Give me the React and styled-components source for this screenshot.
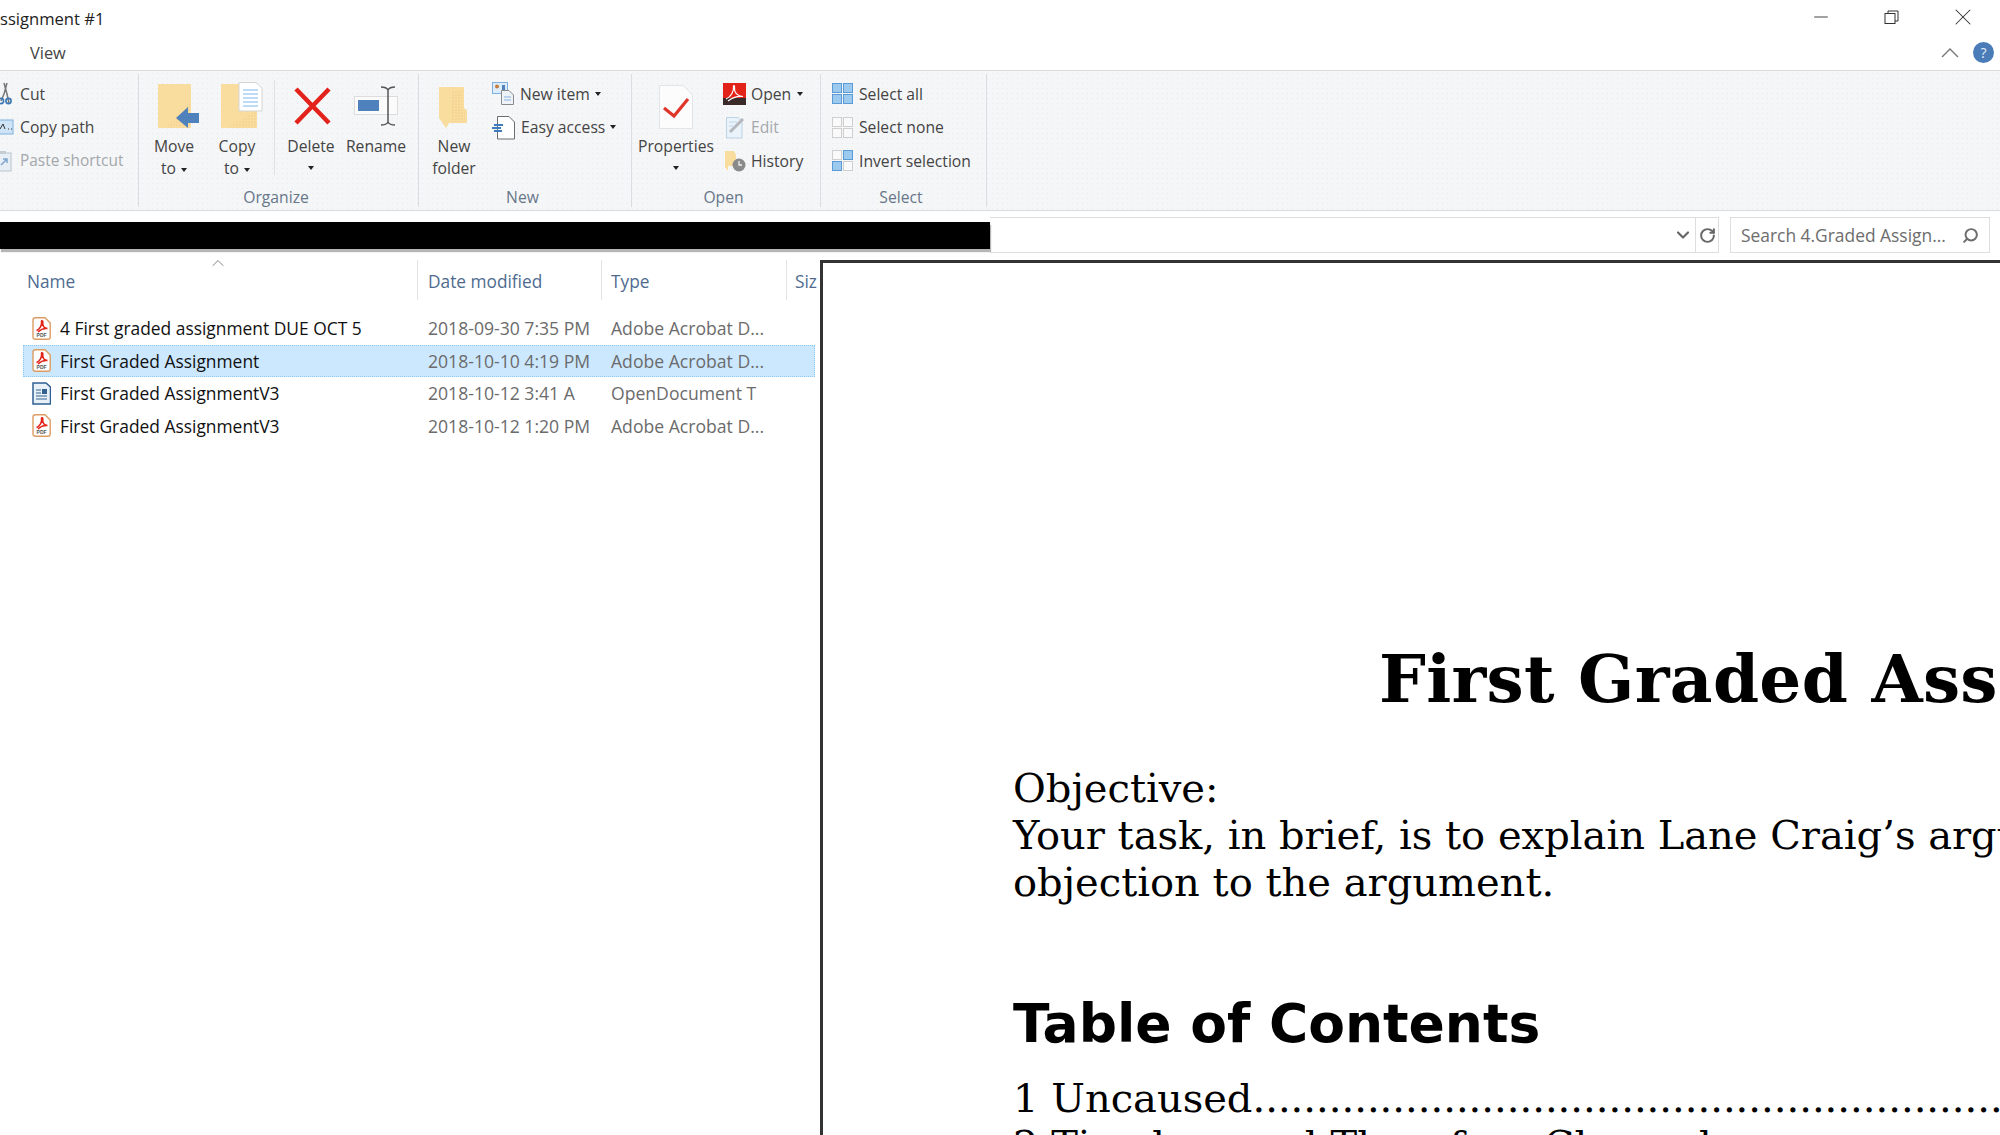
import React from "react";
import styled, { createGlobalStyle } from "styled-components";
import { ChevronDown, ChevronUp, RotateCw, Minus, X, Search } from "lucide-react";

const GlobalStyle = createGlobalStyle`
  html, body { margin: 0; padding: 0; background: #fff; }
  body { font-family: "Open Sans", "Noto Sans", sans-serif; }
`;

const Page = styled.div`
  width: 2000px;
  height: 1135px;
  overflow: hidden;
  display: flex;
  flex-direction: column;
  background: #fff;
`;

const TitleBar = styled.div`
  height: 36px;
  display: flex;
  align-items: center;
  justify-content: space-between;
  padding-top: 1px;
  box-sizing: border-box;
`;
const Title = styled.div`
  font-size: 16.6px;
  color: #222;
`;
const WindowButtons = styled.div`
  display: flex;
  align-items: center;
  color: #333;
  margin: 0 2px 3px 0;
`;
const WindowButton = styled.div`
  width: 71px;
  display: flex;
  justify-content: center;
`;

const TabRow = styled.div`
  height: 34px;
  display: flex;
  align-items: center;
  justify-content: space-between;
  padding: 0 6px 1px 30px;
  box-sizing: border-box;
`;
const Tab = styled.div`
  font-size: 16.4px;
  color: #444;
`;
const TabRight = styled.div`
  display: flex;
  align-items: center;
  gap: 14px;
  color: #777;
`;
const Help = styled.div`
  width: 21px;
  height: 21px;
  border-radius: 50%;
  background: #4a7db8;
  color: #e4eef8;
  font-size: 14px;
  line-height: 21px;
  text-align: center;
`;

const Ribbon = styled.div`
  height: 141px;
  display: flex;
  padding: 3px 0;
  box-sizing: border-box;
  border-top: 1px solid #dadbdc;
  border-bottom: 1px solid #dadbdc;
  background-color: #f5f6f7;
  background-image: radial-gradient(#e8e9eb 0.6px, transparent 0.8px);
  background-size: 5px 5px;
  color: #444;
  font-size: 15.7px;
`;
const Group = styled.div`
  width: ${(p) => p.$w}px;
  box-sizing: border-box;
  border-right: 1px solid #dcdde0;
  display: flex;
  flex-direction: column;
  flex-shrink: 0;
  overflow: hidden;
`;
const GroupBody = styled.div`
  flex: 1;
  display: flex;
  padding: 4px 0 0 ${(p) => p.$pad || 0}px;
  min-height: 0;
`;
const GroupLabel = styled.div`
  height: 20px;
  line-height: 20px;
  padding-right: 5px;
  text-align: center;
  color: #67778a;
  font-size: 15.7px;
`;
const LargeButton = styled.div`
  width: ${(p) => p.$w}px;
  flex-shrink: 0;
  display: flex;
  flex-direction: column;
  align-items: center;
  margin-left: ${(p) => p.$ml || 0}px;
`;
const IconBox = styled.div`
  height: 56px;
  display: flex;
  align-items: center;
  justify-content: center;
  margin-bottom: 1px;
`;
const LargeLabel = styled.div`
  line-height: 22px;
  text-align: center;
  white-space: nowrap;
`;
const RibbonDivider = styled.div`
  width: 1px;
  height: 95px;
  margin: 2px 4px 0 6px;
  background: #dfe0e2;
  flex-shrink: 0;
`;
const SmallColumn = styled.div`
  display: flex;
  flex-direction: column;
  margin-left: ${(p) => p.$ml || 0}px;
  margin-top: -1px;
`;
const SmallItem = styled.div`
  height: 33.5px;
  display: flex;
  align-items: center;
  gap: ${(p) => p.$gap ?? 6}px;
  white-space: nowrap;
  color: ${(p) => (p.$dim ? "#a4a8ad" : "inherit")};
  font-size: ${(p) => (p.$dim ? "15.4px" : "inherit")};
`;
const DimText = styled.span`
  color: #a4a8ad;
`;
const Caret = styled.span`
  display: inline-block;
  width: 0;
  height: 0;
  border-left: 3.5px solid transparent;
  border-right: 3.5px solid transparent;
  border-top: 4px solid #222;
  margin-left: ${(p) => p.$ml ?? 5}px;
  vertical-align: middle;
`;
const CaretRow = styled.div`
  height: 22px;
  display: flex;
  align-items: center;
  justify-content: center;
`;
const SmallIconBox = styled.div`
  width: ${(p) => p.$w || 23}px;
  display: flex;
  justify-content: center;
  flex-shrink: 0;
  margin-left: ${(p) => p.$ml || 0}px;
`;

const AddressRow = styled.div`
  height: 42px;
  display: flex;
  flex-shrink: 0;
`;
const RedactBar = styled.div`
  width: 990px;
  height: 27px;
  margin-top: 11px;
  background: #000;
  box-shadow: 1px 3px 1px #b5b5b5;
`;
const AddressBox = styled.div`
  width: 729px;
  height: 36px;
  margin-top: 6px;
  box-sizing: border-box;
  border: 1px solid #dedede;
  border-left: 0;
  display: flex;
  justify-content: flex-end;
  color: #666;
`;
const AddressDrop = styled.div`
  width: 24px;
  display: flex;
  align-items: center;
  justify-content: center;
`;
const AddressRefresh = styled.div`
  width: 22px;
  display: flex;
  align-items: center;
  justify-content: center;
  border-left: 1px solid #dedede;
`;
const SearchBox = styled.div`
  width: 260px;
  height: 36px;
  margin: 6px 0 0 11px;
  box-sizing: border-box;
  border: 1px solid #dedede;
  display: flex;
  align-items: center;
  justify-content: space-between;
  padding: 0 10px 0 10px;
  font-size: 17.4px;
  color: #6d6d6d;
  white-space: nowrap;
`;
const SearchIcon = styled(Search)`
  transform: scaleX(-1);
  flex-shrink: 0;
`;

const Content = styled.div`
  flex: 1;
  min-height: 0;
  display: flex;
  padding-top: 7px;
`;
const FileList = styled.div`
  width: 820px;
  flex-shrink: 0;
  overflow: hidden;
`;
const HeaderRow = styled.div`
  height: 40px;
  display: flex;
  margin-bottom: 12px;
  position: relative;
`;
const HeaderCell = styled.div`
  width: ${(p) => p.$w}px;
  box-sizing: border-box;
  padding-left: ${(p) => p.$pad}px;
  border-right: ${(p) => (p.$sep ? "1px solid #e3e3e3" : "0")};
  line-height: 44px;
  font-size: 17.3px;
  color: #4e6b8f;
  overflow: hidden;
  white-space: nowrap;
  flex-shrink: 0;
`;
const SortArrow = styled(ChevronUp)`
  position: absolute;
  left: 208px;
  top: -7px;
  color: #777;
`;
const FileRow = styled.div`
  width: 792px;
  height: 32.5px;
  margin-left: 23px;
  box-sizing: border-box;
  display: flex;
  align-items: center;
  font-size: 17.6px;
  color: #111;
  background: ${(p) => (p.$active ? "#cce8ff" : "transparent")};
  outline: ${(p) => (p.$active ? "1px dotted #8fc8f5" : "0")};
  outline-offset: -1px;
  white-space: nowrap;
`;
const NameCell = styled.div`
  width: 394px;
  padding-left: 9px;
  box-sizing: border-box;
  display: flex;
  align-items: center;
  gap: 9px;
  flex-shrink: 0;
  font-size: 17.4px;
`;
const MetaCell = styled.div`
  width: ${(p) => p.$w}px;
  padding-left: ${(p) => p.$pad}px;
  box-sizing: border-box;
  color: #6b6b6b;
  flex-shrink: 0;
`;

const DocPane = styled.div`
  flex: 1;
  min-width: 0;
  border-top: 3px solid #333;
  border-left: 3px solid #333;
  overflow: hidden;
  white-space: nowrap;
  color: #000;
`;
const DocTitle = styled.h1`
  margin: 378px 0 0 556px;
  font-family: "DejaVu Serif", serif;
  font-weight: 700;
  font-size: 66px;
  line-height: 76px;
  letter-spacing: 0.3px;
`;
const DocText = styled.div`
  margin: ${(p) => p.$mt || 0}px 0 0 190px;
  font-family: "DejaVu Serif", serif;
  font-size: 40px;
  line-height: 47px;
`;
const DocHeading = styled.h2`
  margin: 88px 0 0 190px;
  font-family: "DejaVu Sans", sans-serif;
  font-weight: 700;
  font-size: 53.5px;
  line-height: 60px;
`;

const dotFill = "#e2a25f";

function DotPattern({ id }) {
  return (
    <pattern id={id} width="3" height="3" patternUnits="userSpaceOnUse">
      <circle cx="1" cy="1" r="0.6" fill={dotFill} />
    </pattern>
  );
}

function MoveIcon() {
  return (
    <svg width="62" height="48" viewBox="0 0 62 48">
      <defs><DotPattern id="dMove" /></defs>
      <rect x="15" y="2" width="33" height="44" rx="1" fill="#f9dd9e" />
      <polygon points="48,20 48,46 22,46" fill="url(#dMove)" opacity="0.5" />
      <polygon points="33,36 45,25 45,31 56,31 56,41 45,41 45,46" fill="#4f81bd" />
    </svg>
  );
}

function CopyIcon() {
  return (
    <svg width="62" height="48" viewBox="0 0 62 48">
      <defs><DotPattern id="dCopy" /></defs>
      <rect x="15" y="2" width="36" height="44" rx="1" fill="#f9dd9e" />
      <polygon points="51,28 51,46 22,46" fill="url(#dCopy)" opacity="0.6" />
      <polygon points="33,0.5 50,0.5 56,6 56,29 33,29" fill="#fff" stroke="#d4d4d4" />
      <path d="M37 8h15M37 12h15M37 16h15M37 20h15M37 24h15" stroke="#bcdcf5" strokeWidth="2" />
    </svg>
  );
}

function DeleteIcon() {
  return (
    <svg width="64" height="48" viewBox="0 0 64 48">
      <path d="M17 7L50 41M50 7L17 41" stroke="#e3231b" strokeWidth="4.5" />
    </svg>
  );
}

function RenameIcon() {
  return (
    <svg width="66" height="48" viewBox="0 0 66 48">
      <rect x="11.5" y="14.5" width="43" height="18" fill="#fbfbfc" stroke="#dcdcdc" />
      <rect x="15" y="18" width="21" height="11" fill="#4f81bd" />
      <path d="M45 8V40M38 5c3 0 6 1 7 3c1-2 4-3 7-3M38 43c3 0 6-1 7-3c1 2 4 3 7 3" stroke="#555" strokeWidth="1.5" fill="none" />
    </svg>
  );
}

function NewFolderIcon() {
  return (
    <svg width="70" height="48" viewBox="0 0 70 48">
      <defs><DotPattern id="dNew" /></defs>
      <polygon points="20,5 45,5 45,26 48,28 48,41 30,41 27,46 20,36" fill="#f9dd9e" />
      <polygon points="32,8 43,8 43,28 46,30 46,40 32,40" fill="url(#dNew)" opacity="0.7" />
    </svg>
  );
}

function PropertiesIcon() {
  return (
    <svg width="86" height="48" viewBox="0 0 86 48">
      <polygon points="26.5,3.5 50,3.5 59.5,13 59.5,46.5 26.5,46.5" fill="#fcfcfd" stroke="#e3e4e6" />
      <path d="M31 26L41 34L55 17" stroke="#e0352b" strokeWidth="3.2" fill="none" />
    </svg>
  );
}

function ScissorsIcon() {
  return (
    <svg width="12" height="24" viewBox="0 0 12 24">
      <path d="M4 1L7 12L9 21M7 1L4 12L1 19" stroke="#777" strokeWidth="1.5" fill="none" />
      <circle cx="8.5" cy="19" r="2.6" stroke="#3b78b5" strokeWidth="1.6" fill="none" />
      <circle cx="1" cy="19" r="2.6" stroke="#3b78b5" strokeWidth="1.6" fill="none" />
    </svg>
  );
}

function CopyPathIcon() {
  return (
    <svg width="14" height="16" viewBox="0 0 14 16">
      <rect x="-6" y="1" width="19" height="14" fill="#cfe4f7" stroke="#7fb0dd" />
      <path d="M0 10L3 5L5 10M8 10h1M11 10h1" stroke="#333" fill="none" />
    </svg>
  );
}

function PasteShortcutIcon() {
  return (
    <svg width="12" height="22" viewBox="0 0 12 22">
      <rect x="-4" y="3" width="15" height="18" fill="#e7eef5" stroke="#b9c3cc" />
      <rect x="0" y="1" width="6" height="3" fill="#c4ccd4" />
      <path d="M1 15L7 9M3 9h4v4" stroke="#7fa6cf" strokeWidth="1.5" fill="none" />
    </svg>
  );
}

function NewItemIcon() {
  return (
    <svg width="23" height="23" viewBox="0 0 23 23">
      <rect x="0.5" y="0.5" width="15" height="11" fill="#dcecfa" stroke="#7fb0dd" />
      <circle cx="5" cy="4.5" r="2" fill="#c67b3e" />
      <rect x="10" y="3" width="3" height="5" fill="#4f81bd" />
      <polygon points="9.5,8.5 17,8.5 21.5,13 21.5,22.5 9.5,22.5" fill="#eef3f8" stroke="#8a8a8a" />
      <path d="M12 15h7M12 18h7" stroke="#a9c7e6" strokeWidth="1.4" />
    </svg>
  );
}

function EasyAccessIcon() {
  return (
    <svg width="24" height="25" viewBox="0 0 24 25">
      <polygon points="5.5,1.5 17,1.5 22.5,7 22.5,24 5.5,24" fill="#fff" stroke="#6d6d6d" />
      <path d="M2 10h9M0 13h9M2 16h8" stroke="#3f7cbd" strokeWidth="1.8" />
    </svg>
  );
}

function AcrobatIcon() {
  return (
    <svg width="23" height="22" viewBox="0 0 23 22">
      <rect width="23" height="22" fill="#e2231a" />
      <rect y="15" width="23" height="7" fill="#3a2a2a" />
      <path d="M3 16C8 14 11 8 10.5 4C10 2 12 2 11.5 5C11 9 14 13 20 13.5C16 13 10 14 5 18" stroke="#fff" strokeWidth="1.2" fill="none" />
    </svg>
  );
}

function EditIcon() {
  return (
    <svg width="21" height="23" viewBox="0 0 21 23">
      <polygon points="1.5,1.5 13,1.5 17,5 17,22 1.5,22" fill="#eaf2fa" stroke="#bcd2e6" />
      <path d="M5 16L18 3" stroke="#b4b8bd" strokeWidth="3" />
      <path d="M4 6h8M4 10h6" stroke="#c3d8ec" />
    </svg>
  );
}

function HistoryIcon() {
  return (
    <svg width="21" height="22" viewBox="0 0 21 22">
      <polygon points="0,1 9,1 11,5 11,16 3,16 3,21 0,17" fill="#f9dd9e" />
      <circle cx="14" cy="15" r="6.5" fill="#8a8a8a" />
      <path d="M14 11v4h3" stroke="#eee" strokeWidth="1.3" fill="none" />
    </svg>
  );
}

function SelectIcon({ on }) {
  const cells = [[0, 0], [11, 0], [0, 11], [11, 11]];
  return (
    <svg width="21" height="21" viewBox="0 0 21 21">
      {cells.map(([x, y], i) => (
        <rect
          key={i}
          x={x + 0.5}
          y={y + 0.5}
          width="9"
          height="9"
          fill={on[i] ? "#9cc9ee" : "#fafafa"}
          stroke={on[i] ? "#5b9bd5" : "#cfcfcf"}
        />
      ))}
    </svg>
  );
}

function PdfIcon() {
  return (
    <svg width="19" height="23" viewBox="0 0 19 23">
      <path d="M1 3Q1 .8 3.5 .8H13L18.2 6V20Q18.2 22.2 16 22.2H3.5Q1 22.2 1 20Z" fill="#fff" stroke="#dd9c63" strokeWidth="1.4" />
      <path d="M4.5 13.5C8 12 10 8 9.5 5C9 3 11.5 3 10.8 6C10.5 9 12 11 15.5 11.5C12 11 9 12 6 15" stroke="#e2231a" strokeWidth="1.5" fill="none" />
      <text x="9.6" y="20" fontSize="5" textAnchor="middle" fill="#555" fontFamily="Liberation Sans, sans-serif" fontWeight="700">PDF</text>
    </svg>
  );
}

function OdtIcon() {
  return (
    <svg width="19" height="23" viewBox="0 0 19 23">
      <polygon points="1,1 14,1 18.5,5 18.5,22 1,22" fill="#e8f0f8" stroke="#2f5f92" strokeWidth="1.5" />
      <path d="M4 8h5M4 11h5M4 14h11M4 17h11" stroke="#33628f" />
      <rect x="10" y="7" width="5" height="5" fill="#33628f" />
    </svg>
  );
}

const files = [
  { name: "4 First graded assignment DUE OCT 5", date: "2018-09-30 7:35 PM", type: "Adobe Acrobat D...", icon: <PdfIcon /> },
  { name: "First Graded Assignment", date: "2018-10-10 4:19 PM", type: "Adobe Acrobat D...", icon: <PdfIcon />, active: true },
  { name: "First Graded AssignmentV3", date: "2018-10-12 3:41 A", type: "OpenDocument T", icon: <OdtIcon /> },
  { name: "First Graded AssignmentV3", date: "2018-10-12 1:20 PM", type: "Adobe Acrobat D...", icon: <PdfIcon /> },
];

export default function App() {
  return (
    <Page>
      <GlobalStyle />
      <TitleBar>
        <Title>ssignment #1</Title>
        <WindowButtons>
          <WindowButton><Minus size={22} strokeWidth={1} /></WindowButton>
          <WindowButton>
            <svg width="15" height="15" viewBox="0 0 15 15" fill="none" stroke="#333">
              <rect x="1" y="3.5" width="10" height="10" />
              <path d="M4 3.5V1H14V11H11" />
            </svg>
          </WindowButton>
          <WindowButton><X size={28} strokeWidth={0.9} /></WindowButton>
        </WindowButtons>
      </TitleBar>
      <TabRow>
        <Tab>View</Tab>
        <TabRight>
          <svg width="18" height="10" viewBox="0 0 18 10" fill="none" stroke="#777" strokeWidth="1.4">
            <path d="M1 9L9 1L17 9" />
          </svg>
          <Help>?</Help>
        </TabRight>
      </TabRow>
      <Ribbon>
        <Group $w={139}>
          <GroupBody>
            <SmallColumn>
              <SmallItem $gap={8}><ScissorsIcon />Cut</SmallItem>
              <SmallItem $gap={6}><CopyPathIcon />Copy path</SmallItem>
              <SmallItem $gap={8} $dim><PasteShortcutIcon />Paste shortcut</SmallItem>
            </SmallColumn>
          </GroupBody>
          <GroupLabel />
        </Group>
        <Group $w={280}>
          <GroupBody $pad={4}>
            <LargeButton $w={62}>
              <IconBox><MoveIcon /></IconBox>
              <LargeLabel>Move<br />to<Caret /></LargeLabel>
            </LargeButton>
            <LargeButton $w={62} $ml={1}>
              <IconBox><CopyIcon /></IconBox>
              <LargeLabel>Copy<br />to<Caret /></LargeLabel>
            </LargeButton>
            <RibbonDivider />
            <LargeButton $w={64}>
              <IconBox><DeleteIcon /></IconBox>
              <LargeLabel>Delete</LargeLabel>
              <CaretRow><Caret $ml={0} /></CaretRow>
            </LargeButton>
            <LargeButton $w={66}>
              <IconBox><RenameIcon /></IconBox>
              <LargeLabel>Rename</LargeLabel>
            </LargeButton>
          </GroupBody>
          <GroupLabel>Organize</GroupLabel>
        </Group>
        <Group $w={213}>
          <GroupBody>
            <LargeButton $w={70}>
              <IconBox><NewFolderIcon /></IconBox>
              <LargeLabel>New<br />folder</LargeLabel>
            </LargeButton>
            <SmallColumn $ml={3}>
              <SmallItem $gap={5}><NewItemIcon />New item<Caret $ml={0} /></SmallItem>
              <SmallItem $gap={5}><EasyAccessIcon />Easy access<Caret $ml={0} /></SmallItem>
            </SmallColumn>
          </GroupBody>
          <GroupLabel>New</GroupLabel>
        </Group>
        <Group $w={189}>
          <GroupBody>
            <LargeButton $w={88}>
              <IconBox><PropertiesIcon /></IconBox>
              <LargeLabel>Properties</LargeLabel>
              <CaretRow><Caret $ml={0} /></CaretRow>
            </LargeButton>
            <SmallColumn $ml={3}>
              <SmallItem $gap={5}><AcrobatIcon />Open<Caret $ml={1} /></SmallItem>
              <SmallItem $gap={5}><SmallIconBox $ml={2} $w={21}><EditIcon /></SmallIconBox><DimText>Edit</DimText></SmallItem>
              <SmallItem $gap={5}><SmallIconBox $ml={2} $w={21}><HistoryIcon /></SmallIconBox>History</SmallItem>
            </SmallColumn>
          </GroupBody>
          <GroupLabel>Open</GroupLabel>
        </Group>
        <Group $w={166}>
          <GroupBody $pad={11}>
            <SmallColumn>
              <SmallItem $gap={6}><SelectIcon on={[1, 1, 1, 1]} />Select all</SmallItem>
              <SmallItem $gap={6}><SelectIcon on={[0, 0, 0, 0]} />Select none</SmallItem>
              <SmallItem $gap={6}><SelectIcon on={[0, 1, 1, 0]} />Invert selection</SmallItem>
            </SmallColumn>
          </GroupBody>
          <GroupLabel>Select</GroupLabel>
        </Group>
      </Ribbon>
      <AddressRow>
        <RedactBar />
        <AddressBox>
          <AddressDrop><ChevronDown size={20} strokeWidth={2.6} /></AddressDrop>
          <AddressRefresh><RotateCw size={17} strokeWidth={2.8} /></AddressRefresh>
        </AddressBox>
        <SearchBox>
          <span>Search 4.Graded Assign...</span>
          <SearchIcon size={17} strokeWidth={2.8} />
        </SearchBox>
      </AddressRow>
      <Content>
        <FileList>
          <HeaderRow>
            <SortArrow size={20} strokeWidth={1.1} />
            <HeaderCell $w={418} $pad={27} $sep>Name</HeaderCell>
            <HeaderCell $w={184} $pad={10} $sep>Date modified</HeaderCell>
            <HeaderCell $w={185} $pad={9} $sep>Type</HeaderCell>
            <HeaderCell $w={30} $pad={8}>Size</HeaderCell>
          </HeaderRow>
          {files.map((f, i) => (
            <FileRow key={i} $active={f.active}>
              <NameCell>{f.icon}{f.name}</NameCell>
              <MetaCell $w={184} $pad={11}>{f.date}</MetaCell>
              <MetaCell $w={185} $pad={10}>{f.type}</MetaCell>
            </FileRow>
          ))}
        </FileList>
        <DocPane>
          <DocTitle>First Graded Assignment #1</DocTitle>
          <DocText $mt={48}>Objective:</DocText>
          <DocText>Your task, in brief, is to explain Lane Craig’s argument and raise an</DocText>
          <DocText>objection to the argument.</DocText>
          <DocHeading>Table of Contents</DocHeading>
          <DocText $mt={21}>1 Uncaused......................................................................................</DocText>
          <DocText>2 Timeless and Therefore Changeless</DocText>
        </DocPane>
      </Content>
    </Page>
  );
}
